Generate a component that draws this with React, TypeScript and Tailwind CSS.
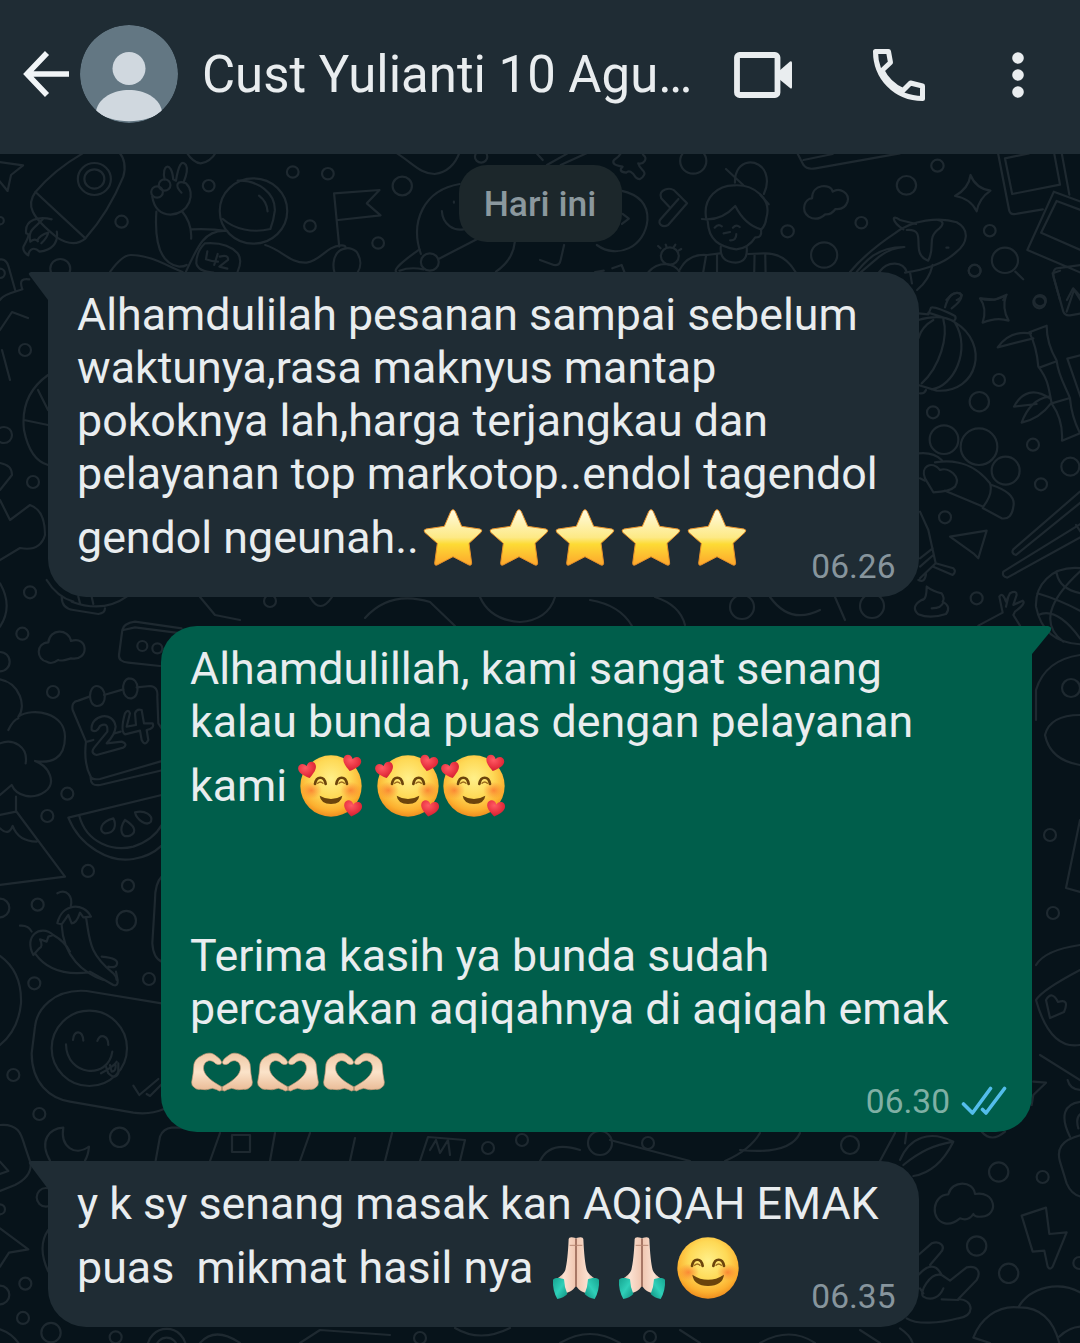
import React from "react";

type Circle = [number, number, number];

function Doodles({ transform, circles, paths }: { transform: string; circles: Circle[]; paths: string[] }) {
  return (
    <g transform={transform}>
      {circles.map(([cx, cy, r], i) => (
        <circle key={i} cx={cx} cy={cy} r={r} vectorEffect="non-scaling-stroke" />
      ))}
      {paths.map((d, i) => (
        <path key={i} d={d} vectorEffect="non-scaling-stroke" />
      ))}
    </g>
  );
}

function Wallpaper() {
  return (
    <svg
      className="absolute inset-0 h-[1343px] w-[1080px]"
      viewBox="0 0 1080 1343"
      fill="none"
      stroke="#1e2930"
      strokeWidth="2.2"
      strokeLinecap="round"
      strokeLinejoin="round"
      aria-hidden="true"
    >
      {/* top left: rocket, astronaut, flag */}
      <Doodles
        transform="translate(0 150) scale(.3444 .3333)"
        circles={[
          [274, 87, 48], [274, 87, 29], [353, 215, 18], [606, 107, 17], [850, 66, 17], [952, 71, 17],
          [1168, 108, 28], [900, 228, 17], [1098, 279, 17], [1397, 20, 18], [175, 356, 29], [736, 183, 98],
          [1248, 336, 26], [478, 105, 17], [456, 126, 17], [0, 212, 11], [0, 370, 14],
        ]}
        paths={[
          "M-10 35 L67 46 L32 75 L22 123 L-8 85",
          "M240 10 C190 40 140 80 103 126 C75 165 90 200 165 262 Q215 295 248 265 C300 205 330 150 358 80 Q370 35 345 5",
          "M103 126 L248 265",
          "M150 208 C115 198 70 208 76 250 C90 250 78 270 68 290 Q65 305 82 316 C85 295 100 290 115 305 C150 300 170 280 165 245",
          "M124 208 C100 235 80 240 88 275 C105 260 115 280 108 272 Q115 255 140 248 Q138 262 120 280",
          "M478 88 C468 45 498 30 503 88 L511 92 C518 45 528 28 540 45 Q548 60 533 97",
          "M442 140 Q450 192 495 194 C550 190 570 130 540 100 C515 90 505 105 527 128",
          "M454 185 C450 250 455 340 520 350 Q535 350 542 345 M528 183 Q558 220 555 266 M555 238 Q610 235 660 243",
          "M690 92 C750 90 800 130 798 182 Q795 210 785 237 C735 250 680 238 647 207",
          "M752 137 Q775 155 777 184",
          "M655 243 C595 240 575 285 540 365",
          "M595 280 Q570 305 570 340 Q575 365 620 368 M595 280 Q660 275 690 310 Q705 330 690 365",
          "M602 304 L598 328 Q615 335 633 335 M632 312 L622 345 M638 320 Q665 312 662 330 L637 350 L660 356",
          "M770 285 C820 300 840 340 890 338 C935 330 945 290 990 286 Q1005 285 1003 294",
          "M985 290 L970 130 L1102 120 L1065 160 L1105 196 L982 210",
          "M1005 295 C960 300 960 370 985 390 C1030 400 1065 350 1035 305 Q1018 292 1005 295",
          "M320 365 Q355 315 380 315 C435 315 480 345 530 366",
          "M1150 365 Q1140 355 1218 298 M1160 362 Q1190 350 1230 358 M1275 326 L1390 265",
          "M1335 102 C1230 120 1190 215 1222 312 M1495 275 Q1490 330 1440 365 M1283 183 C1285 225 1320 243 1345 238",
          "M1318 155 v3",
          "M1145 5 C1200 40 1220 72 1262 72 Q1315 65 1335 5 M540 5 Q562 40 583 40 Q612 35 628 5",
          "M-10 328 L5 328 Q20 330 25 350 L45 424 M0 450 C10 430 50 425 65 418 C55 390 65 385 85 388",
        ]}
      />
      {/* top right: woman, whale, polaroids */}
      <Doodles
        transform="translate(540 150) scale(.3444 .3333)"
        circles={[
          [445, 33, 38], [1154, 47, 18], [1064, 106, 28], [933, 218, 17], [719, 244, 18], [1306, 242, 17],
          [825, 315, 38], [1350, 331, 38], [1262, 362, 17], [377, 318, 26], [1452, 452, 17],
        ]}
        paths={[
          "M20 45 L80 10 M60 45 L135 10 M-10 10 L8 30",
          "M260 0 C265 15 295 -5 300 15 C315 25 300 45 285 40 C290 60 310 65 302 75 Q292 95 278 82 Q262 55 250 68 Q225 65 240 50 Q205 45 215 30 Q230 20 235 10",
          "M235 122 Q315 140 312 210 C305 290 225 330 165 285 M240 192 L258 206 L238 222",
          "M352 145 C340 120 380 105 395 127 L427 160 L372 225 C355 235 340 220 350 208 L402 147 M375 170 L352 145",
          "M540 57 L590 105 M566 98 C565 20 640 25 655 70 Q665 100 650 132 M640 135 L664 163",
          "M483 208 C470 140 520 105 565 106 C620 103 675 145 657 205 Q655 225 643 238",
          "M470 207 Q525 215 567 168 Q595 225 642 238 Q645 265 625 262 Q605 295 570 298 C520 290 490 270 487 215",
          "M507 233 Q518 220 528 229 M560 233 Q570 222 580 231 M533 250 L552 246 M552 271 Q570 272 570 252",
          "M525 290 Q520 335 568 338 Q605 335 600 292 M405 360 Q430 310 485 315 L522 310 M605 312 L655 310 Q710 310 742 366 M482 318 L474 366 M514 315 L514 366 M623 315 L622 366 M654 315 L655 366",
          "M350 295 L343 288 M368 292 L365 284 M388 292 L393 284 M402 302 L410 297 M315 366 Q335 342 365 342 Q395 346 405 366 M210 355 L237 345 L245 366 M160 366 L185 362",
          "M0 330 L40 345 Q58 348 60 330 L70 285",
          "M790 145 C790 100 845 100 850 125 C870 110 900 130 893 155 Q885 180 858 177 Q845 195 828 193 Q805 215 780 200 C755 180 770 145 790 145",
          "M745 5 L765 45 Q775 60 800 55 L1045 10 M765 30 L850 12",
          "M1250 75 Q1265 115 1308 122 Q1275 145 1268 184 Q1250 145 1205 138 Q1245 115 1250 75",
          "M1330 10 L1362 180 Q1365 195 1380 192 L1460 178 M1515 10 L1537 134 M1350 25 L1371 132 L1510 104 L1493 10 M1350 25 L1420 10",
          "M1570 155 L1492 125 L1415 300 L1570 368 M1570 180 L1500 153 L1455 248 L1570 300 M1570 345 L1500 355 Q1487 360 1492 385 L1510 450",
          "M1530 450 L1548 415 L1570 440 M1380 365 L1403 388",
          "M900 366 Q950 305 1030 250 C1080 210 1160 200 1210 217 C1250 240 1240 280 1210 305 C1170 345 1110 360 1060 368",
          "M1055 238 C1020 215 1020 190 1045 210 L1092 222 M1065 240 C1130 235 1070 310 1127 332 C1150 290 1120 265 1160 235 Q1180 215 1155 210",
          "M905 385 C945 330 980 290 1058 291 Q1015 295 985 320 L930 368 M985 366 C1010 330 1055 335 1065 366 M1140 345 Q1130 390 1095 420 M1075 370 L1080 400",
          "M1180 293 h6 M1180 450 C1200 425 1215 425 1225 435 Q1220 448 1210 450 M1280 445 L1320 449 L1355 434 L1345 450",
        ]}
      />
      {/* right of the first message */}
      <Doodles
        transform="translate(900 270) scale(.3333)"
        circles={[
          [224, 2, 18], [418, 97, 18], [297, 330, 18], [238, 395, 29], [99, 427, 18], [399, 524, 18],
          [511, 590, 27], [423, 643, 18], [132, 509, 43], [237, 530, 55], [317, 602, 42], [135, 742, 18], [230, 985, 18],
        ]}
        paths={[
          "M240 85 Q280 98 318 76 Q305 115 326 152 Q290 140 248 158 Q262 115 240 85",
          "M55 130 L85 133 L93 113 Q105 108 165 138 Q170 145 162 153 L85 128 M135 112 Q150 60 180 70 Q195 85 155 115 M55 150 Q125 130 165 157 C270 220 235 370 110 362 L55 345 M100 150 Q65 170 55 205 M130 148 C145 200 120 290 65 340 M165 158 C215 240 160 350 95 358 M60 370 Q73 372 78 360",
          "M458 10 L490 125 Q495 138 510 136 L545 130 M458 10 L480 2 M500 125 L522 60 L545 95",
          "M388 187 L440 167 Q440 220 470 272 C475 320 500 355 510 385 Q515 440 540 490 L486 512 Q490 450 455 400 C445 350 445 330 415 290 Q410 230 388 187 M418 293 L470 274 M455 400 L510 384 M400 205 L293 232 Q330 180 393 190 M450 385 Q380 340 342 410 L410 402 M445 380 Q390 390 365 458 Q420 445 453 400 M545 255 L502 266 L545 390",
          "M55 550 Q100 545 125 570 M105 577 C180 565 230 590 270 640 Q280 670 250 710 L135 662 M275 645 Q350 670 340 710 Q335 750 305 745 L248 714 M60 625 L75 632",
          "M100 667 L75 625 C60 590 95 570 120 600 C145 590 185 620 165 650 Q150 665 100 667",
          "M60 725 L85 780 L107 880 L60 925 M60 865 L98 835 M60 890 L100 855 M107 880 L160 895 Q170 905 158 915 L100 890 M55 930 Q75 940 78 912",
          "M150 800 L260 782 L235 865 L220 850 Z",
          "M540 665 L340 838 Q332 850 348 855 L545 695 M545 760 L310 905 Q305 920 322 923 L545 800 M528 765 L545 790",
          "M80 950 Q100 965 125 970 Q135 985 128 995 Q155 1010 138 1032 Q90 1048 55 1033 Q30 1010 65 990 Q80 990 80 950 M95 1015 Q125 1015 130 997",
          "M235 1067 L308 1028 L298 980 Q308 965 318 995 L330 970 Q350 960 350 975 L340 1005 L368 992 Q380 1000 345 1025 L340 1035 L360 1067 M318 1010 L325 980",
          "M545 895 C450 885 405 950 408 1010 Q430 1120 545 1123 M412 970 Q480 990 545 1025 M470 910 Q480 960 545 970 M545 900 Q390 1040 490 1115 M415 1035 Q470 1010 540 1105",
        ]}
      />
      {/* lower left: calendar, tree, watermelon, chillies */}
      <Doodles
        transform="translate(0 580) scale(.3333)"
        circles={[
          [90, 37, 18], [67, 161, 18], [0, 245, 29], [159, 336, 18], [202, 641, 18], [142, 708, 18], [264, 873, 18],
          [384, 917, 18], [113, 974, 18], [0, 984, 28], [379, 1022, 29], [427, 198, 15], [472, 205, 15],
        ]}
        paths={[
          "M0 10 Q40 80 0 140 M140 0 Q170 50 220 65 M185 50 Q185 85 220 90 L295 102 Q315 100 315 85 M215 65 Q310 100 380 50 M235 50 L240 70 M275 50 L280 72",
          "M140 245 C110 240 105 190 145 187 C150 145 205 145 213 183 C265 165 270 245 213 235 Q180 245 175 240 Q155 255 140 245",
          "M545 145 L405 125 Q370 130 367 150 L357 225 Q355 245 385 248 L480 258 M370 150 L405 142 L545 160",
          "M268 350 L235 362 Q213 365 218 390 L258 485 Q250 550 272 590 Q270 620 300 615 L490 570 M272 590 Q275 600 300 597 L490 542 M312 345 L370 328 M410 322 L450 318 Q475 320 472 350 L475 430 L485 445",
          "M290 318 C265 318 262 375 290 378 C325 380 320 318 290 318 M387 295 C360 300 365 360 395 355 C420 350 420 295 387 295",
          "M275 450 C270 405 340 390 347 440 Q345 465 320 490 L365 485 Q385 492 370 503 L290 525 Q268 520 285 500 L322 455 Q325 425 300 438 Q290 460 275 450 M375 400 Q385 385 390 400 L380 440 L408 435 L405 400 Q410 385 425 390 L432 430 L458 430 Q465 445 440 450 L445 480 Q435 500 425 480 L420 452 L375 463 Q360 455 375 400 M262 485 L280 480 M345 460 L362 455",
          "M0 298 C60 310 80 380 55 410 C100 380 195 400 195 470 C195 540 150 550 105 543 C150 560 170 610 135 635 C100 660 50 650 35 615 L0 645 M25 450 Q40 420 55 415 M0 490 C40 475 85 500 77 550 M48 650 L48 693 L195 890 L0 915 M0 705 L48 695 M0 745 Q25 770 38 738 Q55 785 110 785",
          "M485 645 L205 713 C240 800 330 850 400 837 Q450 830 485 797 M238 708 C260 790 340 815 400 800 Q460 780 485 735",
          "M340 715 C300 725 295 755 315 760 C345 760 350 735 340 715 M375 720 C355 750 365 775 390 767 C415 755 400 735 375 720 M405 697 C410 720 440 740 453 725 C460 705 435 690 405 697",
          "M172 940 C200 925 220 950 212 980 M172 1030 C185 970 250 965 273 1010 L250 1012 L240 998 Q230 1030 215 1030 L205 1005 L185 1033 Z M185 1035 C190 1130 250 1180 310 1200 M258 1012 C270 1080 265 1120 340 1180 Q350 1190 350 1200 M60 1037 Q85 1035 95 1055 M100 1125 C70 1070 120 1030 160 1065 L145 1070 L140 1085 L120 1078 Q130 1100 118 1105 Z M160 1065 Q195 1085 210 1115 M105 1120 C140 1170 200 1185 265 1177 M305 1130 Q360 1135 350 1155 Q345 1165 325 1160",
          "M485 890 Q465 910 465 960 L457 1090 Q460 1135 485 1145",
        ]}
      />
      <Doodles
        transform="translate(0 940) scale(.3333)"
        circles={[
          [103, 130, 18], [447, 117, 18], [40, 405, 18], [118, 522, 18], [359, 592, 29], [268, 325, 113],
          [76, 1031, 18], [69, 1134, 18], [153, 1178, 29], [347, 1192, 18], [0, 1065, 28], [0, 808, 15], [138, 772, 28],
          [500, 1225, 58], [500, 1225, 32],
        ]}
        paths={[
          "M270 95 L340 135 Q355 140 353 120 L348 95",
          "M0 48 C45 80 65 130 63 190 Q55 270 0 315",
          "M485 190 L260 153 C160 145 110 210 105 260 L95 340 C95 430 150 475 210 485 L400 518 Q450 525 490 508",
          "M219 300 C222 268 248 270 250 302 M292 303 C300 280 325 285 325 315 M198 313 C200 410 325 420 337 335 M303 400 C330 385 345 375 350 365 M318 380 L325 400 Q345 420 355 400 L355 370 M330 375 L335 395 Q348 395 347 375",
          "M400 437 L418 465 L475 417 M440 462 L450 468 L488 430",
          "M150 662 C115 600 150 565 190 563 C180 620 225 650 267 620 Q265 645 255 662",
          "M467 662 L480 590 Q490 565 515 563 L560 563",
          "M0 555 C60 550 65 590 75 620 L92 670 Q95 710 45 735 L0 753 M0 665 L25 693 L0 702 M0 865 L85 928 L27 938 L0 980 M145 870 Q110 920 145 995 M0 1168 Q35 1180 55 1209",
        ]}
      />
      {/* lower right: leaf, cloud, bolt, hand */}
      <Doodles
        transform="translate(900 1080) scale(.3333)"
        circles={[[296, 276, 29], [428, 291, 18], [230, 498, 29], [326, 580, 29], [538, 549, 18]]}
        paths={[
          "M400 5 L438 8 L400 45 L395 75 M503 0 Q510 30 545 30 M245 155 Q275 190 315 155",
          "M0 240 C30 170 90 150 160 185 C130 245 90 280 40 288 M10 255 C60 215 100 195 160 185 M20 155 L15 190",
          "M135 430 C90 420 95 345 145 343 C155 300 220 300 225 342 C285 330 300 405 245 410 Q225 412 220 402 Q205 425 180 415 Q155 435 135 430",
          "M365 407 L438 383 L448 462 L500 457 L458 560 Q450 572 443 560 L433 512 L398 515 Z",
          "M545 65 C490 70 480 110 510 170 M545 100 Q525 110 535 145 M545 165 C480 180 470 210 480 245 L500 310 Q515 345 545 350",
          "M55 525 L95 490 C120 480 140 500 120 520 L90 555 M55 585 Q100 535 125 585 L150 602 L200 562 C230 555 245 575 230 600 L175 657 Q210 660 212 685 Q210 710 175 715 C120 730 50 735 20 715 M125 585 C90 575 55 640 70 650 C95 665 120 650 130 625 M125 658 L175 660 M60 625 L70 640",
          "M545 640 C480 600 390 620 355 682 C290 675 240 720 220 773 L270 789 M355 682 C420 680 460 720 478 789 M478 770 Q510 740 545 740 M0 745 Q30 765 38 789",
        ]}
      />
      {/* narrow strips beside and between the messages */}
      <g>
        <path d="M0 330 L12 312 L28 318 M2 350 L10 380 M48 375 Q20 395 24 430 Q30 460 48 465 M24 420 L48 425 M38 390 L48 410 M0 500 L10 520 L30 505 Q45 510 45 535 Q40 552 20 548 L0 560" />
        <circle cx="25" cy="350" r="6" />
        <circle cx="33" cy="482" r="6" />
        <circle cx="4" cy="435" r="8" />
        <path d="M0 463 Q12 465 12 475 L0 490" />
        <circle cx="270" cy="601" r="6" />
        <path d="M200 597 L215 615 L240 620 M310 597 Q320 615 332 597 M365 618 Q390 590 430 602 L455 626 M480 597 Q490 620 520 622 Q548 620 555 597 M590 600 Q620 605 632 626 M655 597 Q680 605 685 625 M770 597 Q790 625 820 610 M835 597 L845 620" />
        <circle cx="742" cy="607" r="12" />
        <circle cx="872" cy="606" r="12" />
        <path d="M210 1161 L220 1133 M232 1135 h18 v17 h-18 Z M275 1133 L270 1161 M310 1133 L300 1161 M350 1161 L355 1138 M385 1161 L392 1133 M420 1161 L428 1137 L465 1140 L460 1161 M430 1150 L436 1140 L440 1153 L448 1140 L450 1155 M540 1161 Q550 1140 580 1150 M610 1140 L690 1161 M725 1161 Q750 1150 760 1133 M740 1150 Q790 1155 800 1133 M880 1161 L895 1133" />
        <circle cx="488" cy="1148" r="6" />
        <circle cx="522" cy="1140" r="6" />
        <circle cx="600" cy="1143" r="12" />
        <circle cx="648" cy="1143" r="6" />
        <circle cx="850" cy="1145" r="9" />
        <path d="M200 1343 Q215 1326 240 1343 M300 1343 L320 1330 L390 1335 M455 1328 Q480 1343 510 1328 M560 1343 Q590 1325 620 1343 M680 1330 L700 1343 M760 1343 Q790 1326 815 1343 M860 1330 L880 1343" />
        <circle cx="420" cy="1338" r="6" />
        <circle cx="650" cy="1337" r="6" />
        <path d="M1080 655 Q1045 660 1036 690 M1080 715 Q1050 715 1045 735 Q1050 760 1080 765 M1036 690 L1036 720 M1080 820 L1066 888 L1080 892 M1080 945 Q1045 950 1036 965 M1080 970 Q1042 990 1036 1000 Q1050 1050 1080 1045 M1046 1000 q6 -10 12 2 q12 -4 6 10 l-14 6 Z M1040 1055 L1080 1080" />
        <circle cx="1050" cy="835" r="6" />
        <circle cx="1053" cy="913" r="6" />
        <circle cx="1071" cy="688" r="9" />
      </g>
    </svg>
  );
}

function EmojiDefs() {
  return (
    <svg className="absolute h-0 w-0" aria-hidden="true">
      <defs>
        <linearGradient id="starFill" x1="0" y1="0" x2="0" y2="1">
          <stop offset="0" stopColor="#fffbe0" />
          <stop offset=".5" stopColor="#fde985" />
          <stop offset=".62" stopColor="#fddb35" />
          <stop offset="1" stopColor="#fda62c" />
        </linearGradient>
        <radialGradient id="faceFill" cx=".5" cy=".38" r=".63">
          <stop offset="0" stopColor="#fff08a" />
          <stop offset=".5" stopColor="#fed956" />
          <stop offset=".82" stopColor="#fcb02f" />
          <stop offset="1" stopColor="#ee8a1d" />
        </radialGradient>
        <radialGradient id="blush">
          <stop offset="0" stopColor="#fa6b2b" stopOpacity=".7" />
          <stop offset="1" stopColor="#fa7b2b" stopOpacity="0" />
        </radialGradient>
        <radialGradient id="heartFill" cx=".4" cy=".3" r=".8">
          <stop offset="0" stopColor="#ff5a64" />
          <stop offset=".6" stopColor="#e62f3e" />
          <stop offset="1" stopColor="#c31b2c" />
        </radialGradient>
        <linearGradient id="skin" x1="0" y1="0" x2="0" y2="1">
          <stop offset="0" stopColor="#efc8a5" />
          <stop offset=".5" stopColor="#fbe3c9" />
          <stop offset="1" stopColor="#e9b994" />
        </linearGradient>
        <linearGradient id="palm" x1="0" y1="0" x2="1" y2="0">
          <stop offset="0" stopColor="#d7a58c" />
          <stop offset=".4" stopColor="#fbe2d2" />
          <stop offset="1" stopColor="#f0c6b0" />
        </linearGradient>
        <linearGradient id="cuff" x1="0" y1="0" x2="1" y2="1">
          <stop offset="0" stopColor="#16a38f" />
          <stop offset=".5" stopColor="#2fd0b9" />
          <stop offset="1" stopColor="#0f8e7d" />
        </linearGradient>
      </defs>
    </svg>
  );
}

function Emoji({ label, children }: { label: string; children: React.ReactNode }) {
  return (
    <svg className="h-[66px] w-[66px] shrink-0 overflow-visible" viewBox="0 0 198 198" role="img" aria-label={label}>
      {children}
    </svg>
  );
}

function Star() {
  return (
    <Emoji label="star">
      <path
        d="M99 14 Q103 14 106 20 L125 64 L180 72 Q189 75 183 82 L147 115 L155 175 Q154 183 147 180 L99 155 L51 180 Q44 183 44 175 L52 115 L14 82 Q9 75 18 72 L73 64 L92 20 Q95 14 99 14 Z"
        fill="url(#starFill)"
        stroke="#e8912a"
        strokeWidth="3"
      />
    </Emoji>
  );
}

function FaceBase() {
  return (
    <>
      <circle cx="99" cy="99" r="92" fill="url(#faceFill)" />
      <ellipse cx="40" cy="112" rx="32" ry="26" fill="url(#blush)" />
      <ellipse cx="158" cy="112" rx="32" ry="26" fill="url(#blush)" />
      <g fill="none" stroke="#6b440c" strokeWidth="8" strokeLinecap="round">
        <path d="M51 93 C55 68 79 68 83 93" />
        <path d="M59 91 Q67 83 75 91" strokeWidth="4" stroke="#9a6a1c" />
        <path d="M115 93 C119 68 143 68 147 93" />
        <path d="M123 91 Q131 83 139 91" strokeWidth="4" stroke="#9a6a1c" />
      </g>
    </>
  );
}

function Heart({ x, y, angle }: { x: number; y: number; angle: number }) {
  return (
    <path
      transform={`translate(${x} ${y}) rotate(${angle})`}
      d="M0 25 C-10 17 -28 6 -27 -9 C-26 -24 -7 -27 0 -12 C7 -27 26 -24 27 -9 C28 6 10 17 0 25 Z"
      fill="url(#heartFill)"
    />
  );
}

function LoveFace() {
  return (
    <Emoji label="smiling face with hearts">
      <FaceBase />
      <path d="M65 128 Q99 148 133 128 Q130 152 99 153 Q68 152 65 128 Z" fill="#6b440c" />
      <Heart x={29} y={51} angle={-14} />
      <Heart x={161} y={30} angle={14} />
      <Heart x={164} y={166} angle={10} />
    </Emoji>
  );
}

function SmileFace() {
  return (
    <Emoji label="smiling face">
      <FaceBase />
      <path d="M52 119 Q99 150 147 119 Q143 152 99 153 Q56 152 52 119 Z" fill="#6b440c" />
    </Emoji>
  );
}

function HeartHands() {
  const hand =
    "M98 67 C94 55 84 50 76 44 C64 36 48 40 38 47 Q20 54 15 72 Q13 102 8 127 Q8 138 14 141 Q22 150 34 148 Q52 152 70 145 Q84 148 91 153 L98 151 L98 140 C86 134 64 121 53 107 C42 94 40 78 50 67 C60 58 72 62 80 71 Q96 78 98 67 Z";
  return (
    <Emoji label="heart hands">
      <path d={hand} fill="url(#skin)" stroke="#cf9a78" strokeWidth="2" />
      <path d={hand} transform="translate(198 0) scale(-1 1)" fill="url(#skin)" stroke="#cf9a78" strokeWidth="2" />
    </Emoji>
  );
}

function PrayHands() {
  const palm = "M98 9 Q78 3 77 12 C75 55 72 85 67 105 C60 122 45 127 38 135 L58 177 C75 174 90 168 98 153 Z";
  const cuff = "M30 134 C40 126 55 130 63 133 Q64 157 73 177 Q62 189 43 192 Q28 165 30 134 Z";
  return (
    <Emoji label="folded hands">
      <path d={palm} fill="url(#palm)" />
      <path d={palm} transform="translate(198 0) scale(-1 1)" fill="url(#palm)" />
      <path d="M99 12 V155" stroke="#a87360" strokeWidth="5" />
      <path d="M80 31 H118" stroke="#b98773" strokeWidth="3" />
      <path d={cuff} fill="url(#cuff)" />
      <path d={cuff} transform="translate(198 0) scale(-1 1)" fill="url(#cuff)" />
    </Emoji>
  );
}

function Header() {
  return (
    <header className="relative flex h-[154px] items-center bg-[#1f2c34] pb-[6px]">
      <svg className="ml-[22px] h-[50px] w-[50px]" viewBox="0 0 50 50" fill="none" stroke="#f1f5f7" strokeWidth="5.6">
        <path d="M47 25 H6 M25 4 L5 25 L25 46" />
      </svg>
      <svg className="ml-[8px] h-[98px] w-[98px] rounded-full" viewBox="0 0 98 98">
        <circle cx="49" cy="49" r="49" fill="#637783" />
        <circle cx="49" cy="43.500" r="16.500" fill="#d0d8df" />
        <path d="M16 86 C22 58 76 58 82 86 C68 99.500 30 99.500 16 86 Z" fill="#d0d8df" />
      </svg>
      <h1 className="ml-[24px] w-[531px] whitespace-nowrap pt-[2px] text-[50.900px] leading-[60px] text-[#e9edef]">Cust Yulianti 10 Agu…</h1>
      <svg className="absolute left-[730px] top-[45px] h-[60px] w-[66px]" viewBox="730 45 66 60" fill="none">
        <rect x="737" y="55" width="40.500" height="40" rx="2.500" stroke="#e9edef" strokeWidth="5.800" />
        <path d="M779 71 L790 61.500 Q792 60.500 792 63 V87 Q792 89.500 790 88 L779 79 Z" fill="#e9edef" />
      </svg>
      <svg
        className="absolute left-[870px] top-[45px] h-[60px] w-[60px]"
        viewBox="870 45 60 60"
        fill="none"
        stroke="#e9edef"
        strokeWidth="5"
        strokeLinejoin="round"
      >
        <path d="M875.500 51.500 H888.500 L890.500 62.500 L882 70.500 C886 79 893 86 903 90.500 L910.500 83 L922.500 86 V98.500 C895 98.500 875.500 77 875.500 51.500 Z" />
      </svg>
      <svg className="absolute left-[1010px] top-[50px] h-[50px] w-[16px]" viewBox="0 0 16 50" fill="#e9edef">
        <circle cx="8" cy="8" r="5.800" />
        <circle cx="8" cy="25" r="5.800" />
        <circle cx="8" cy="42" r="5.800" />
      </svg>
    </header>
  );
}

function Line({ children }: { children?: React.ReactNode }) {
  return <div className="flex h-[53px] items-center whitespace-pre">{children}</div>;
}

function EmojiLine({ children }: { children: React.ReactNode }) {
  return <div className="flex h-[75px] items-center whitespace-pre">{children}</div>;
}

function Incoming({ time, children }: { time: string; children: React.ReactNode }) {
  return (
    <div className="relative ml-[48px] w-[871px] rounded-[38px] rounded-tl-none bg-[#1f2c34] pb-[22px] pl-[29px] pt-[16px]">
      <svg className="absolute -left-[20px] top-0 h-[29px] w-[21px]" viewBox="0 0 21 29">
        <path d="M21 0 H3 Q-1 1 2 4 L20 28 H21 Z" fill="#1f2c34" />
      </svg>
      {children}
      <span className="absolute bottom-[10px] right-[23.500px] text-[33.500px] leading-[40px] text-[#87959d]">{time}</span>
    </div>
  );
}

function Outgoing({ time, children }: { time: string; children: React.ReactNode }) {
  return (
    <div className="relative ml-[161px] w-[871px] rounded-[36px] rounded-tr-none bg-[#005e4b] pb-[22px] pl-[29px] pt-[16px]">
      <svg className="absolute -right-[20px] top-0 h-[29px] w-[21px]" viewBox="0 0 21 29">
        <path d="M0 0 H17 Q22 1 19 6 L1 28 H0 Z" fill="#005e4b" />
      </svg>
      {children}
      <span className="absolute bottom-[10px] right-[24px] flex items-center gap-[11px] text-[33.500px] leading-[40px] text-[#7fb0a5]">
        {time}
        <svg
          className="mb-[2px] h-[32px] w-[47px]"
          viewBox="0 0 47 32"
          fill="none"
          stroke="#53bdeb"
          strokeWidth="3.600"
          strokeLinecap="round"
          strokeLinejoin="round"
        >
          <path d="M2.500 19 L11.500 28 L29.500 3.500 M21.500 24.500 L25 28 L43.500 3.500" />
        </svg>
      </span>
    </div>
  );
}

export default function App() {
  return (
    <div className="relative h-[1343px] w-[1080px] overflow-hidden bg-[#07131a] font-['Roboto',sans-serif]">
      <Wallpaper />
      <EmojiDefs />
      <Header />
      <main className="relative flex flex-col items-start text-[44.750px] text-[#e9edef]">
        <div className="mt-[11px] flex h-[77px] w-[163px] items-center justify-center self-center rounded-[28px] bg-[#1c272b] pt-[3px] text-[35.500px] font-medium text-[#8b989e]">
          Hari ini
        </div>
        <div className="mt-[30px] flex flex-col gap-[29px]">
          <Incoming time="06.26">
            <Line>Alhamdulilah pesanan sampai sebelum</Line>
            <Line>waktunya,rasa maknyus mantap</Line>
            <Line>pokoknya lah,harga terjangkau dan</Line>
            <Line>pelayanan top markotop..endol tagendol</Line>
            <EmojiLine>
              gendol ngeunah..
              <span className="w-[1px]" />
              <Star />
              <Star />
              <Star />
              <Star />
              <Star />
            </EmojiLine>
          </Incoming>
          <Outgoing time="06.30">
            <Line>Alhamdulillah, kami sangat senang</Line>
            <Line>kalau bunda puas dengan pelayanan</Line>
            <EmojiLine>
              {"kami "}
              <LoveFace />
              <span className="w-[11px]" />
              <LoveFace />
              <LoveFace />
            </EmojiLine>
            <Line />
            <Line />
            <Line>Terima kasih ya bunda sudah</Line>
            <Line>percayakan aqiqahnya di aqiqah emak</Line>
            <EmojiLine>
              <div className="-ml-[1.500px] flex">
                <HeartHands />
                <HeartHands />
                <HeartHands />
              </div>
            </EmojiLine>
          </Outgoing>
          <Incoming time="06.35">
            <Line>y k sy senang masak kan AQiQAH EMAK</Line>
            <EmojiLine>
              {"puas  mikmat hasil nya "}
              <div className="-ml-[2px] flex">
                <PrayHands />
                <PrayHands />
                <SmileFace />
              </div>
            </EmojiLine>
          </Incoming>
        </div>
      </main>
    </div>
  );
}
